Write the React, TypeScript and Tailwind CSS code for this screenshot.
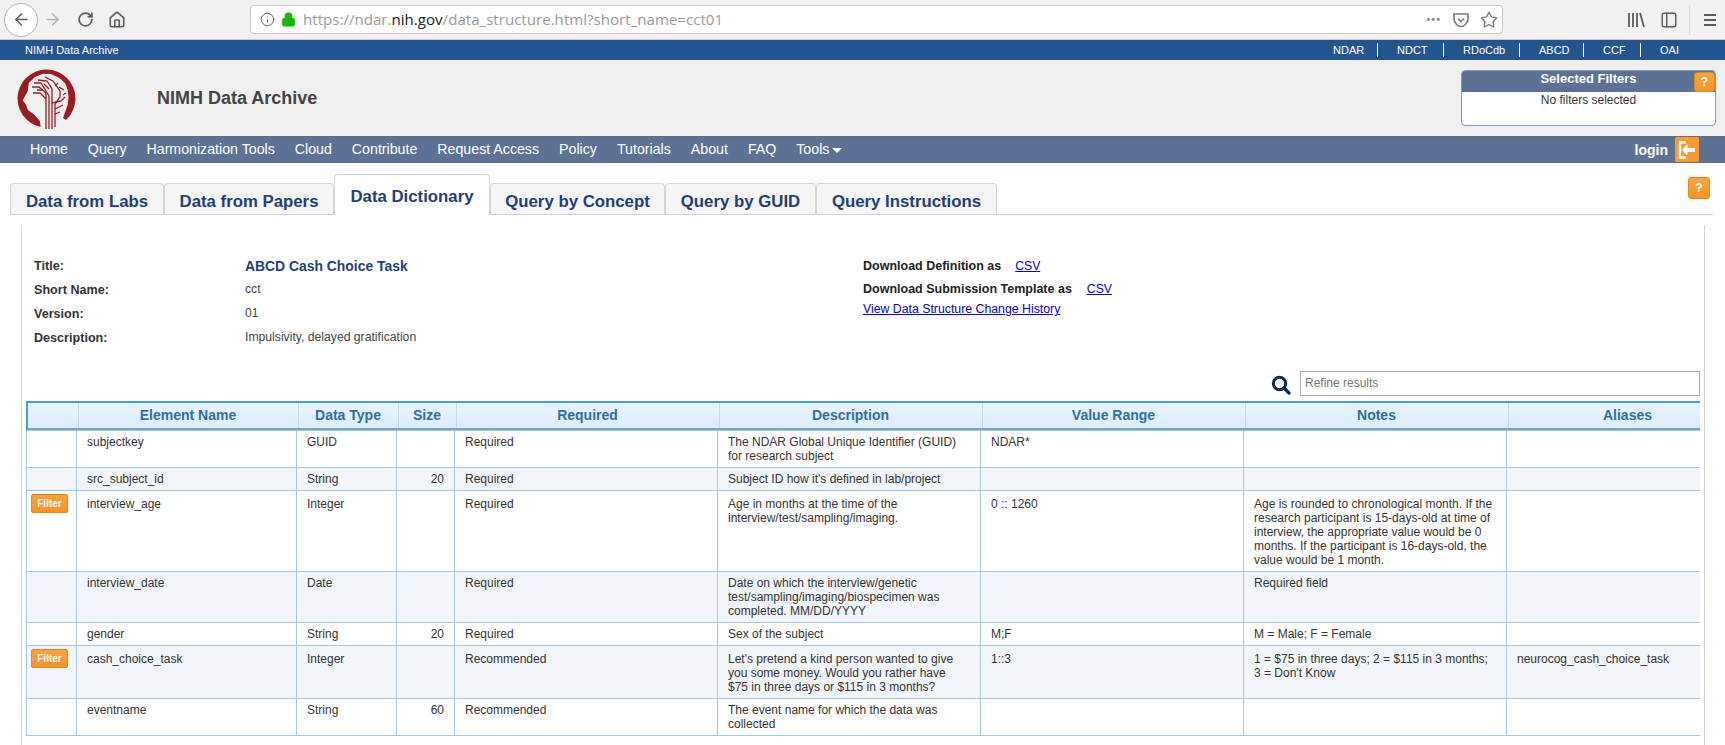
import { ArrowLeft, ArrowRight, Home, Info, Lock, PanelLeft, RotateCw, Star } from "lucide-react";

const tabs = [
  { label: "Data from Labs", width: "w-[154px]" },
  { label: "Data from Papers", width: "w-[170px]" },
  { label: "Data Dictionary", width: "w-[156px]", active: true },
  { label: "Query by Concept", width: "w-[175px]" },
  { label: "Query by GUID", width: "w-[151px]" },
  { label: "Query Instructions", width: "w-[181px]" },
];

const navItems = ["Home", "Query", "Harmonization Tools", "Cloud", "Contribute", "Request Access", "Policy", "Tutorials", "About", "FAQ"];
const topLinks = [
  { label: "NDAR", width: "w-[64px]" },
  { label: "NDCT", width: "w-[66px]" },
  { label: "RDoCdb", width: "w-[76px]" },
  { label: "ABCD", width: "w-[64px]" },
  { label: "CCF", width: "w-[57px]" },
  { label: "OAI", width: "w-[55px]" },
];

const bodyColumns = ["w-[50px]", "w-[220px]", "w-[100px]", "w-[58px]", "w-[263px]", "w-[263px]", "w-[263px]", "w-[263px]", "w-[240px]"];
const headColumns = ["w-[51px]", "w-[220px]", "w-[100px]", "w-[58px]", "w-[263px]", "w-[263px]", "w-[263px]", "w-[263px]", "w-[239px]"];

const rows = [
  { name: "subjectkey", type: "GUID", size: "", req: "Required", desc: "The NDAR Global Unique Identifier (GUID) for research subject", range: "NDAR*", notes: "", alias: "" },
  { name: "src_subject_id", type: "String", size: "20", req: "Required", desc: "Subject ID how it's defined in lab/project", range: "", notes: "", alias: "" },
  {
    name: "interview_age", type: "Integer", size: "", req: "Required", filter: true,
    desc: "Age in months at the time of the interview/test/sampling/imaging.", range: "0 :: 1260",
    notes: "Age is rounded to chronological month. If the research participant is 15-days-old at time of interview, the appropriate value would be 0 months. If the participant is 16-days-old, the value would be 1 month.",
    alias: "",
  },
  { name: "interview_date", type: "Date", size: "", req: "Required", desc: "Date on which the interview/genetic test/sampling/imaging/biospecimen was completed. MM/DD/YYYY", range: "", notes: "Required field", alias: "" },
  { name: "gender", type: "String", size: "20", req: "Required", desc: "Sex of the subject", range: "M;F", notes: "M = Male; F = Female", alias: "" },
  {
    name: "cash_choice_task", type: "Integer", size: "", req: "Recommended", filter: true,
    desc: "Let's pretend a kind person wanted to give you some money. Would you rather have $75 in three days or $115 in 3 months?", range: "1::3",
    notes: "1 = $75 in three days; 2 = $115 in 3 months; 3 = Don't Know", alias: "neurocog_cash_choice_task",
  },
  { name: "eventname", type: "String", size: "60", req: "Recommended", desc: "The event name for which the data was collected", range: "", notes: "", alias: "" },
];

const headers = ["", "Element Name", "Data Type", "Size", "Required", "Description", "Value Range", "Notes", "Aliases"];

function Logo() {
  return (
    <svg width="60" height="60" viewBox="0 0 60 60" className="shrink-0">
      <circle cx="29.5" cy="29.5" r="29" fill="#9b1c20" />
      <path d="M11.7 14 L18 8 L25.7 4.7 L34 5 L42.3 9 L48 14 L50.7 20.7 L51.5 28 L50.7 35.7 L46 49 L52 53 L44 62 L24 62 L23 52.3 L17.3 45.7 L10.7 40.7 L9 35.7 L5.7 31.3 L10.7 22.3 Z" fill="#f0f0f0" />
      <g fill="none" stroke="#9b1c20" strokeWidth="1.3">
        <path d="M29 24 V60 M32 27 V60 M35 30 V60 M38 35 V58" />
        <path d="M29 24 L22 18 L15 18 M32 27 L24 14 L17 14 M35 30 L35 20 L30 12 L21 11 M38 35 L43 28 L43 22 L36 12 L28 8" />
        <path d="M35 34 L44 32 L48 28 M38 40 L46 36 M38 45 L43 43 M29 30 L23 24 L16 24 M42 18 L47 21 M38 17 L41 14 M26 21 L20 21 M32 20 L27 15 M46 26 L49 24" />
      </g>
    </svg>
  );
}

function BrowserBar() {
  return (
    <div className="flex h-[40px] items-center bg-[#f2f1f0] border-b border-[#c9c8c6] text-[#5a5a5a]">
      <div className="ml-[4px] flex h-[34px] w-[34px] items-center justify-center rounded-full border border-[#b5b4b2] bg-white">
        <ArrowLeft size={19} strokeWidth={2} />
      </div>
      <ArrowRight size={19} strokeWidth={2} className="ml-[5px] text-[#b4b4b4]" />
      <RotateCw size={17} strokeWidth={2.4} className="ml-[15px]" />
      <Home size={18} strokeWidth={2.2} className="ml-[14px]" />
      <div className="ml-[124px] flex h-[29px] w-[1253px] items-center rounded-[4px] border border-[#c8c8c6] bg-white pl-[9px] pr-[4px]">
        <Info size={15} strokeWidth={1.5} />
        <Lock size={15} strokeWidth={2.5} className="ml-[6px] text-[#12bc00]" fill="#12bc00" />
        <span className="ml-[7px] font-['Open_Sans',sans-serif] text-[15.1px] text-[#9a9a9a]">
          https://ndar.<span className="text-[#222]">nih.gov</span>/data_structure.html?short_name=cct01
        </span>
        <span className="ml-auto text-[#8a8a8a] text-[11px] tracking-[1px] font-bold">•••</span>
        <svg width="18" height="18" viewBox="0 0 18 18" className="ml-[11px] text-[#7a7a7a]" fill="none" stroke="currentColor" strokeWidth="1.7">
          <path d="M2 3 H16 V8 C16 12 12 15.5 9 15.5 C6 15.5 2 12 2 8 Z" />
          <path d="M6 7.5 L9 10.5 L12 7.5" />
        </svg>
        <Star size={18} strokeWidth={1.8} className="ml-[10px] text-[#7a7a7a]" />
      </div>
      <svg width="18" height="18" viewBox="0 0 18 18" className="ml-[124px]" fill="none" stroke="#5a5a5a" strokeWidth="1.8">
        <path d="M2 2 V16 M6 2 V16 M10 2 V16 M13 2 L17 16" />
      </svg>
      <PanelLeft size={18} strokeWidth={1.9} className="ml-[15px]" />
      <div className="ml-[11px] h-[30px] w-px bg-[#dcdbd9]" />
      <svg width="14" height="14" viewBox="0 0 14 14" className="ml-[13px]" fill="none" stroke="#5a5a5a" strokeWidth="1.8">
        <path d="M1 2 H13 M1 7 H13 M1 12 H13" />
      </svg>
    </div>
  );
}

function HelpButton({ className }: { className: string }) {
  return (
    <div className={"flex h-[20px] w-[21px] items-center justify-center rounded-[3px] border border-[#e08a1e] bg-gradient-to-b from-[#f9a63f] to-[#fb9226] text-[12px] font-bold text-white " + className}>
      ?
    </div>
  );
}

function SiteHeader() {
  return (
    <>
      <div className="flex h-[20px] items-center bg-[#215592] text-[11px] text-white">
        <span className="ml-[25px]">NIMH Data Archive</span>
        <div className="ml-auto mr-[29px] flex items-center">
          {topLinks.map((l, i) => (
            <span key={l.label} className={"flex h-[14px] items-center pl-[19px] " + l.width + (i < topLinks.length - 1 ? " border-r border-white" : "")}>
              {l.label}
            </span>
          ))}
        </div>
      </div>
      <div className="flex h-[76px] items-start bg-[#f0f0f0] pl-[17px]">
        <div className="mt-[9px]">
          <Logo />
        </div>
        <span className="ml-[80px] mt-[25px] text-[18px] font-bold text-[#444]">NIMH Data Archive</span>
        <div className="relative ml-auto mr-[9px] mt-[10px] h-[56px] w-[255px] rounded-[4px] border border-[#7f9cc4] bg-white">
          <div className="h-[21px] rounded-t-[3px] bg-[#5b7296] text-center text-[13px] font-bold leading-[16px] text-white">Selected Filters</div>
          <div className="text-center text-[12px] leading-[17px] text-[#333]">No filters selected</div>
          <HelpButton className="absolute right-0 top-[1px]" />
        </div>
      </div>
      <div className="flex h-[27px] items-center border-y border-[#6b6b6b]/60 bg-[#5b7296] pl-[30px] pr-[26px] text-[14.2px] text-white">
        <div className="flex items-center gap-[20px] pt-[1px]">
          {navItems.map((n) => (
            <span key={n}>{n}</span>
          ))}
          <span className="flex items-center gap-[3px]">
            Tools
            <span className="mt-[1px] h-0 w-0 border-x-[5px] border-t-[5px] border-x-transparent border-t-white" />
          </span>
        </div>
        <span className="ml-auto pt-[1px] text-[14px] font-bold">login</span>
        <div className="ml-[7px] flex h-[25px] w-[24px] items-center justify-center rounded-[2px] bg-[#fb9a35]">
          <svg width="20" height="20" viewBox="0 0 20 20" fill="none" stroke="white">
            <path d="M9 2.5 H3 V17.5 H9" strokeWidth="2.4" />
            <path d="M8 10 H18" strokeWidth="4" />
            <path d="M10 5 L5.5 10 L10 15 Z" fill="white" strokeWidth="1" />
          </svg>
        </div>
      </div>
    </>
  );
}

function Tabs() {
  return (
    <div className="relative ml-[10px] mr-[12px] mt-[11px] flex h-[41px] items-end border-b border-[#d0d0d0]">
      {tabs.map((t) =>
        t.active ? (
          <div key={t.label} className={"z-10 -mb-px h-[41px] rounded-t-[4px] border border-b-0 border-[#d5d5d5] bg-white pt-[12px] text-center text-[16.8px] font-bold leading-[20px] text-[#1f3f7a] " + t.width}>
            {t.label}
          </div>
        ) : (
          <div key={t.label} className={"h-[31px] rounded-t-[4px] border border-b-0 border-[#d5d5d5] bg-[#f5f5f5] pt-[8px] text-center text-[16.8px] font-bold leading-[20px] text-[#1f3f7a] " + t.width}>
            {t.label}
          </div>
        ),
      )}
      <HelpButton className="absolute right-[3px] top-[3px] h-[22px] w-[22px]" />
    </div>
  );
}

function Details() {
  return (
    <div className="flex pl-[12px] pt-[29px] text-[12.2px] text-[#444]">
      <div className="w-[829px]">
        <div className="flex h-[24px] items-center">
          <b className="w-[211px] text-[12.6px] text-[#333]">Title:</b>
          <b className="text-[#1f3f7a] text-[13.9px]">ABCD Cash Choice Task</b>
        </div>
        <div className="flex h-[24px] items-center">
          <b className="w-[211px] text-[12.6px] text-[#333]">Short Name:</b>
          <span className="-mt-[2px]">cct</span>
        </div>
        <div className="flex h-[24px] items-center">
          <b className="w-[211px] text-[12.6px] text-[#333]">Version:</b>
          <span className="-mt-[2px]">01</span>
        </div>
        <div className="flex h-[24px] items-center">
          <b className="w-[211px] text-[12.6px] text-[#333]">Description:</b>
          <span className="-mt-[2px]">Impulsivity, delayed gratification</span>
        </div>
      </div>
      <div className="text-[#222]">
        <div className="flex h-[24px] items-center text-[12.5px]">
          <b>Download Definition as</b>
          <a className="ml-[14px] text-[12.2px] text-[#0000ee] underline">CSV</a>
        </div>
        <div className="flex h-[22px] items-center text-[12.5px]">
          <b>Download Submission Template as</b>
          <a className="ml-[15px] text-[12.2px] text-[#0000ee] underline">CSV</a>
        </div>
        <a className="block text-[12.3px] text-[#0000ee] underline">View Data Structure Change History</a>
      </div>
    </div>
  );
}

function Colgroup({ widths }: { widths: string[] }) {
  return (
    <colgroup>
      {widths.map((c, i) => (
        <col key={i} className={c} />
      ))}
    </colgroup>
  );
}

function DataTable() {
  return (
    <div className="ml-[4px] w-[1674px] overflow-hidden">
      <table className="w-[1720px] table-fixed border-collapse border-t-2 border-b-2 border-t-[#4a9bdc] border-b-[#6fa5d0] text-[14px]">
        <Colgroup widths={headColumns} />
        <thead>
          <tr className="h-[27px] bg-gradient-to-b from-[#e8f4fe] to-[#dcedfb]">
            {headers.map((h, i) => (
              <th key={i} className={"border-r border-[#c5d9ec] p-0 font-bold text-[#2e6ea8] " + (i === 0 ? "border-l-2 border-l-[#4a9bdc]" : "")}>
                {h}
              </th>
            ))}
          </tr>
        </thead>
      </table>
      <table className="w-[1720px] table-fixed border-collapse text-[12px] leading-[14px] text-[#333]">
        <Colgroup widths={bodyColumns} />
        <tbody>
          {rows.map((r, i) => {
            // rows with a Filter button sit 2px lower
            const cell = "border border-[#a3c9e6] pb-[4px] align-top " + (r.filter ? "pt-[6px]" : "pt-[4px]");
            return (
              <tr key={r.name} className={i % 2 ? "bg-[#f2f5fa]" : "bg-white"}>
                <td className="border border-[#a3c9e6] pl-[4px] pt-[3px] align-top">
                  {r.filter && (
                    <div className="flex h-[19px] w-[37px] items-center justify-center rounded-[2px] border border-[#e08a1e] bg-gradient-to-b from-[#fba33c] to-[#fb9226] text-[10px] font-bold text-white">
                      Filter
                    </div>
                  )}
                </td>
                <td className={cell + " pl-[10px] pr-[9px]"}>{r.name}</td>
                <td className={cell + " pl-[10px] pr-[9px]"}>{r.type}</td>
                <td className={cell + " pr-[10px] text-right"}>{r.size}</td>
                <td className={cell + " pl-[10px] pr-[9px]"}>{r.req}</td>
                <td className={cell + " pl-[10px] pr-[18px]"}>{r.desc}</td>
                <td className={cell + " pl-[10px] pr-[9px]"}>{r.range}</td>
                <td className={cell + " pl-[10px] pr-[9px]"}>{r.notes}</td>
                <td className={cell + " pl-[10px] pr-[9px]"}>{r.alias}</td>
              </tr>
            );
          })}
        </tbody>
      </table>
    </div>
  );
}

export default function App() {
  return (
    <div className="h-[745px] w-[1725px] overflow-hidden bg-white font-['Liberation_Sans',Arial,sans-serif]">
      <BrowserBar />
      <SiteHeader />
      <Tabs />
      <div className="ml-[21px] mr-[20px] mt-[10px] h-[522px] border-x border-[#d5d5d5]">
        <Details />
        <div className="mt-[21px] flex h-[24px] items-center justify-end pr-[4px]">
          <svg width="20" height="20" viewBox="0 0 20 20" fill="none" stroke="#12294b" className="mr-[9px] mt-[3px]">
            <circle cx="8.5" cy="8.5" r="6.2" strokeWidth="3" />
            <path d="M13 13 L18 18" strokeWidth="3.2" strokeLinecap="round" />
          </svg>
          <input readOnly placeholder="Refine results" className="h-[25px] w-[400px] border border-[#aaa] bg-white px-[4px] text-[12px] placeholder:text-[#777]" />
        </div>
        <div className="mt-[6px]">
          <DataTable />
        </div>
      </div>
    </div>
  );
}
